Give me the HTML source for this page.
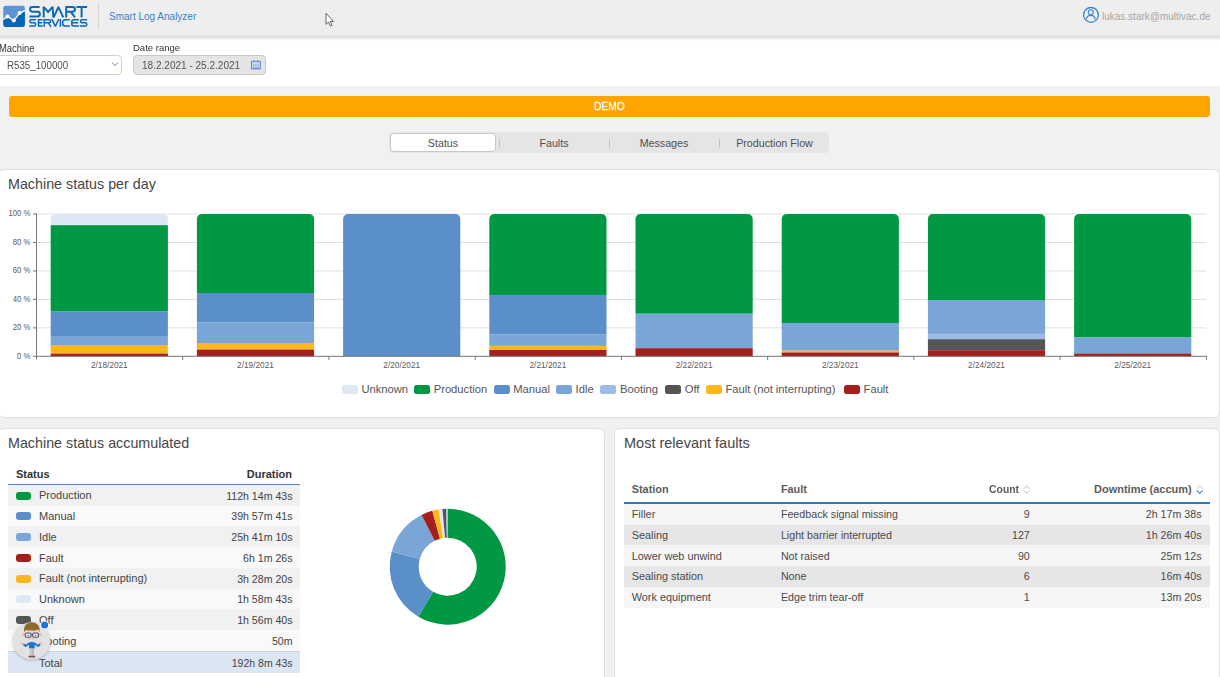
<!DOCTYPE html><html><head><meta charset="utf-8"><style>
*{box-sizing:border-box;margin:0;padding:0}
html,body{width:1220px;height:677px;overflow:hidden;background:#f1f1f1;font-family:"Liberation Sans",sans-serif;color:#333}
.a{position:absolute}
.t{position:absolute;white-space:nowrap;line-height:1}
#hdr{left:0;top:0;width:1220px;height:35px;background:#eeeeee;}
#flt{left:0;top:35px;width:1220px;height:51px;background:#fff}
.card{position:absolute;background:#fff;border:1px solid #e0e0e0;border-radius:6px}
.sel{position:absolute;border:1px solid #cfcfcf;border-radius:4px;background:#fff}
</style></head><body><div id="flt" class="a"></div>
<div id="hdr" class="a"></div>
<div class="a" style="left:0;top:34.6px;width:1220px;height:6px;background:linear-gradient(to bottom,rgba(0,0,0,.07) 0,rgba(0,0,0,.14) 30%,rgba(0,0,0,.04) 70%,rgba(0,0,0,0) 100%)"></div>
<svg class="a" style="left:0;top:0" width="100" height="35" viewBox="0 0 100 35">
<defs><clipPath id="lc"><rect x="3.3" y="5.85" width="21.6" height="21.05" rx="2.3"/></clipPath></defs>
<g clip-path="url(#lc)">
<rect x="3" y="5" width="23" height="23" fill="#5e94d3"/>
<path d="M2,20.8 L7.5,17 L13.8,21 L19.7,13.6 L26,10.6 L26,28 L2,28 Z" fill="#0765b8"/>
<path d="M2,20.4 L7.5,16.5 L13.8,20.5 L19.7,13.1 L26,10.1" fill="none" stroke="#fff" stroke-width="1.3" stroke-linejoin="round"/>
<circle cx="7.5" cy="16.4" r="2" fill="#fff"/><circle cx="13.8" cy="20.4" r="2" fill="#fff"/><circle cx="19.7" cy="13" r="2" fill="#fff"/>
</g>
<g fill="none" stroke="#0a66b8" stroke-width="1.95" stroke-linejoin="miter" stroke-miterlimit="2.5">
<path d="M39.6,7 H32.4 Q30.1,7 30.1,9.35 Q30.1,11.7 32.4,11.7 H37.5 Q39.9,11.7 39.9,14.1 Q39.9,16.5 37.5,16.5 H29.4"/>
<path d="M43.7,17.4 V6.8 L48.1,12 L52.6,6.8 L53.3,17.4"/>
<path d="M53.6,17.4 L58.4,7.2 L63.3,17.4" stroke-linejoin="round"/>
<path d="M66.2,17.4 V7 H72.6 Q75,7 75,9.35 Q75,11.7 72.6,11.7 H66.2 M70.6,11.7 L75,17.4"/>
<path d="M76.4,7 H87.1 M81.6,7 V17.4"/>
</g>
<g fill="none" stroke="#0a66b8" stroke-width="1.5" stroke-linejoin="miter" stroke-miterlimit="2">
<path d="M35.9,19.7 H31.2 Q29.9,19.7 29.9,21.25 Q29.9,22.8 31.2,22.8 H34.3 Q35.6,22.8 35.6,24.45 Q35.6,26.1 34.3,26.1 H29.2"/>
<path d="M42.7,19.7 H38.5 V26.1 H42.7 M38.5,22.8 H42.2"/>
<path d="M44.2,26.8 V19.7 H49 Q50.6,19.7 50.6,21.25 Q50.6,22.8 49,22.8 H44.2 M48.4,22.8 L51,26.8"/>
<path d="M51.8,19 L55.3,26.4 L58.8,19"/>
<path d="M60.4,19 V26.8"/>
<path d="M69.8,19.7 H65.4 Q62.6,19.7 62.6,22.9 Q62.6,26.1 65.4,26.1 H69.8"/>
<path d="M78.9,19.7 H74 Q71.8,19.7 71.8,21.7 V24.1 Q71.8,26.1 74,26.1 H78.9 M71.8,22.8 H78.2"/>
<path d="M87.1,19.7 H82.1 Q80.5,19.7 80.5,21.25 Q80.5,22.8 82.1,22.8 H85.3 Q86.8,22.8 86.8,24.45 Q86.8,26.1 85.3,26.1 H79.8"/>
</g>
<rect x="98" y="2" width="1" height="28" fill="#d6d6d6"/>
</svg>
<div class="t" style="left:109.00px;top:12.40px;font-size:10px;color:#3b82c4">Smart Log Analyzer</div>
<svg class="a" style="left:322px;top:10px" width="16" height="20" viewBox="0 0 16 20">
<path d="M4,3.2 L4,14.4 L6.6,12 L8.4,16 L10,15.3 L8.3,11.4 L11.6,11.4 Z" fill="#fff" stroke="#555" stroke-width="0.9" stroke-linejoin="round"/></svg>
<svg class="a" style="left:1080px;top:5px" width="22" height="20" viewBox="0 0 22 20">
<circle cx="11" cy="9.9" r="7.4" fill="none" stroke="#3a86c8" stroke-width="1.3"/>
<circle cx="10.8" cy="7.3" r="2.5" fill="none" stroke="#3a86c8" stroke-width="1.1"/>
<path d="M6.3,14.3 A4.6,4.9 0 0 1 15.3,14.3" fill="none" stroke="#3a86c8" stroke-width="1.2"/></svg>
<div class="t" style="left:1102.00px;top:11.90px;font-size:10px;color:#a6a6a6">lukas.stark@multivac.de</div>
<div class="t" style="left:-1.50px;top:44.20px;font-size:10px;color:#333;transform:scaleX(0.94);transform-origin:0 0">Machine</div>
<div class="sel" style="left:-6px;top:54.5px;width:128px;height:20.5px"></div>
<div class="t" style="left:7.00px;top:59.60px;font-size:11px;color:#4e4e4e;transform:scaleX(0.885);transform-origin:0 0">R535_100000</div>
<svg class="a" style="left:110px;top:60px" width="10" height="8" viewBox="0 0 10 8"><path d="M1.8,2.5 L5,5.6 L8.2,2.5" fill="none" stroke="#5a8fc6" stroke-width="1"/></svg>
<div class="t" style="left:133.00px;top:42.70px;font-size:9.8px;color:#333;transform:scaleX(0.97);transform-origin:0 0">Date range</div>
<div class="sel" style="left:133px;top:54.5px;width:133px;height:20.5px;background:#e4e4e4;border-color:#c9c9c9"></div>
<div class="t" style="left:142.00px;top:60.30px;font-size:10.5px;color:#555;transform:scaleX(0.955);transform-origin:0 0">18.2.2021 - 25.2.2021</div>
<svg class="a" style="left:250px;top:59px" width="12" height="11" viewBox="0 0 12 11">
<rect x="1.5" y="2.3" width="8.9" height="7.6" fill="#c6dcf2" stroke="#7382d2" stroke-width="1"/>
<path d="M3.6,5 V9.4 M5.9,5 V9.4 M8.2,5 V9.4" stroke="#8a9ad8" stroke-width="0.8"/>
<path d="M2,9.5 H10" stroke="#6e7ed0" stroke-width="0.8"/>
<rect x="3.5" y="1" width="1.1" height="2.4" fill="#6d9ad8"/><rect x="7.2" y="1" width="1.1" height="2.4" fill="#6d9ad8"/></svg>
<div class="a" style="left:8.5px;top:96px;width:1201.5px;height:20.8px;background:#ffa500;border-radius:3px;box-shadow:0 0 0 1px #eef2f7"></div>
<div class="t" style="left:593.50px;top:100.90px;font-size:10.5px;color:#fff;transform:scaleX(0.97);transform-origin:0 0;-webkit-text-stroke:0.3px #fff">DEMO</div>
<div class="a" style="left:389px;top:132px;width:440px;height:21px;background:#e5e5e5;border-radius:4px"></div>
<div class="a" style="left:390px;top:133px;width:106px;height:19px;background:#fff;border:1px solid #c8c8c8;border-radius:4px"></div>
<div class="a" style="left:498.5px;top:139px;width:1px;height:9px;background:#c4c4c4"></div>
<div class="a" style="left:608.8px;top:139px;width:1px;height:9px;background:#c4c4c4"></div>
<div class="a" style="left:719.2px;top:139px;width:1px;height:9px;background:#c4c4c4"></div>
<div class="t" style="left:343.00px;top:138.00px;font-size:10.7px;color:#4f4f4f;width:200px;text-align:center">Status</div>
<div class="t" style="left:454.00px;top:138.00px;font-size:10.7px;color:#4f4f4f;width:200px;text-align:center">Faults</div>
<div class="t" style="left:564.00px;top:138.00px;font-size:10.7px;color:#4f4f4f;width:200px;text-align:center">Messages</div>
<div class="t" style="left:674.50px;top:138.00px;font-size:10.7px;color:#4f4f4f;width:200px;text-align:center">Production Flow</div>
<div class="card" style="left:-2px;top:169px;width:1222px;height:249px"></div>
<div class="card" style="left:-2px;top:428px;width:607px;height:260px"></div>
<div class="card" style="left:614px;top:428px;width:606px;height:260px"></div>
<div class="t" style="left:8px;top:177px;font-size:14.3px;color:#464646">Machine status per day</div>
<div class="t" style="left:8px;top:436px;font-size:14.3px;color:#464646">Machine status accumulated</div>
<div class="t" style="left:624px;top:436px;font-size:14.5px;color:#464646">Most relevant faults</div>
<svg class="a" style="left:0;top:0" width="1220" height="677" viewBox="0 0 1220 677"><rect x="36.4" y="327.38" width="1170" height="1" fill="#dfdfdf"/><rect x="36.4" y="298.91" width="1170" height="1" fill="#dfdfdf"/><rect x="36.4" y="270.44" width="1170" height="1" fill="#dfdfdf"/><rect x="36.4" y="241.97" width="1170" height="1" fill="#dfdfdf"/><rect x="36.4" y="213.50" width="1170" height="1" fill="#dfdfdf"/><path d="M50.70,225.20 V219.45 Q50.70,213.95 56.20,213.95 H162.40 Q167.90,213.95 167.90,219.45 V225.20 Z" fill="#dee8f4"/><rect x="50.70" y="225.20" width="117.2" height="86.40" fill="#009843"/><rect x="50.70" y="311.60" width="117.2" height="24.40" fill="#5b8fca"/><rect x="50.70" y="336.00" width="117.2" height="9.00" fill="#79a6d7"/><rect x="50.70" y="345.00" width="117.2" height="8.60" fill="#fdb71c"/><rect x="50.70" y="353.60" width="117.2" height="2.75" fill="#a41f1e"/><text transform="translate(109.30,367.8) scale(0.9,1)" text-anchor="middle" font-size="9.2" fill="#5a5a5a" font-family="Liberation Sans">2/18/2021</text><path d="M196.90,293.00 V219.45 Q196.90,213.95 202.40,213.95 H308.60 Q314.10,213.95 314.10,219.45 V293.00 Z" fill="#009843"/><rect x="196.90" y="293.00" width="117.2" height="29.20" fill="#5b8fca"/><rect x="196.90" y="322.20" width="117.2" height="20.80" fill="#79a6d7"/><rect x="196.90" y="343.00" width="117.2" height="6.60" fill="#fdb71c"/><rect x="196.90" y="349.60" width="117.2" height="6.75" fill="#a41f1e"/><text transform="translate(255.50,367.8) scale(0.9,1)" text-anchor="middle" font-size="9.2" fill="#5a5a5a" font-family="Liberation Sans">2/19/2021</text><path d="M343.10,356.35 V219.45 Q343.10,213.95 348.60,213.95 H454.80 Q460.30,213.95 460.30,219.45 V356.35 Z" fill="#5b8fca"/><text transform="translate(401.70,367.8) scale(0.9,1)" text-anchor="middle" font-size="9.2" fill="#5a5a5a" font-family="Liberation Sans">2/20/2021</text><path d="M489.30,294.90 V219.45 Q489.30,213.95 494.80,213.95 H601.00 Q606.50,213.95 606.50,219.45 V294.90 Z" fill="#009843"/><rect x="489.30" y="294.90" width="117.2" height="39.70" fill="#5b8fca"/><rect x="489.30" y="334.60" width="117.2" height="11.30" fill="#79a6d7"/><rect x="489.30" y="345.90" width="117.2" height="4.10" fill="#fdb71c"/><rect x="489.30" y="350.00" width="117.2" height="6.35" fill="#a41f1e"/><text transform="translate(547.90,367.8) scale(0.9,1)" text-anchor="middle" font-size="9.2" fill="#5a5a5a" font-family="Liberation Sans">2/21/2021</text><path d="M635.50,313.70 V219.45 Q635.50,213.95 641.00,213.95 H747.20 Q752.70,213.95 752.70,219.45 V313.70 Z" fill="#009843"/><rect x="635.50" y="313.70" width="117.2" height="34.50" fill="#79a6d7"/><rect x="635.50" y="348.20" width="117.2" height="8.15" fill="#a41f1e"/><text transform="translate(694.10,367.8) scale(0.9,1)" text-anchor="middle" font-size="9.2" fill="#5a5a5a" font-family="Liberation Sans">2/22/2021</text><path d="M781.70,322.90 V219.45 Q781.70,213.95 787.20,213.95 H893.40 Q898.90,213.95 898.90,219.45 V322.90 Z" fill="#009843"/><rect x="781.70" y="322.90" width="117.2" height="27.80" fill="#79a6d7"/><rect x="781.70" y="350.70" width="117.2" height="1.80" fill="#fdb71c"/><rect x="781.70" y="352.50" width="117.2" height="3.85" fill="#a41f1e"/><text transform="translate(840.30,367.8) scale(0.9,1)" text-anchor="middle" font-size="9.2" fill="#5a5a5a" font-family="Liberation Sans">2/23/2021</text><path d="M927.90,300.00 V219.45 Q927.90,213.95 933.40,213.95 H1039.60 Q1045.10,213.95 1045.10,219.45 V300.00 Z" fill="#009843"/><rect x="927.90" y="300.00" width="117.2" height="33.90" fill="#79a6d7"/><rect x="927.90" y="333.90" width="117.2" height="5.30" fill="#9bbde5"/><rect x="927.90" y="339.20" width="117.2" height="11.00" fill="#555555"/><rect x="927.90" y="350.20" width="117.2" height="6.15" fill="#a41f1e"/><text transform="translate(986.50,367.8) scale(0.9,1)" text-anchor="middle" font-size="9.2" fill="#5a5a5a" font-family="Liberation Sans">2/24/2021</text><path d="M1074.10,337.50 V219.45 Q1074.10,213.95 1079.60,213.95 H1185.80 Q1191.30,213.95 1191.30,219.45 V337.50 Z" fill="#009843"/><rect x="1074.10" y="337.50" width="117.2" height="16.00" fill="#79a6d7"/><rect x="1074.10" y="353.50" width="117.2" height="2.85" fill="#a41f1e"/><text transform="translate(1132.70,367.8) scale(0.9,1)" text-anchor="middle" font-size="9.2" fill="#5a5a5a" font-family="Liberation Sans">2/25/2021</text><rect x="36" y="213.5" width="1" height="146" fill="#777"/><rect x="33" y="355.8" width="1173.5" height="1" fill="#777"/><rect x="33" y="327.38" width="3.5" height="1" fill="#777"/><rect x="33" y="298.91" width="3.5" height="1" fill="#777"/><rect x="33" y="270.44" width="3.5" height="1" fill="#777"/><rect x="33" y="241.97" width="3.5" height="1" fill="#777"/><rect x="33" y="213.50" width="3.5" height="1" fill="#777"/><rect x="182.15" y="356" width="1" height="4" fill="#777"/><rect x="328.40" y="356" width="1" height="4" fill="#777"/><rect x="474.65" y="356" width="1" height="4" fill="#777"/><rect x="620.90" y="356" width="1" height="4" fill="#777"/><rect x="767.15" y="356" width="1" height="4" fill="#777"/><rect x="913.40" y="356" width="1" height="4" fill="#777"/><rect x="1059.65" y="356" width="1" height="4" fill="#777"/><rect x="1205.90" y="356" width="1" height="4" fill="#777"/><text transform="translate(30.4,358.65) scale(0.88,1)" text-anchor="end" font-size="8.8" fill="#5a5a5a" font-family="Liberation Sans">0 %</text><text transform="translate(30.4,330.18) scale(0.88,1)" text-anchor="end" font-size="8.8" fill="#5a5a5a" font-family="Liberation Sans">20 %</text><text transform="translate(30.4,301.71) scale(0.88,1)" text-anchor="end" font-size="8.8" fill="#5a5a5a" font-family="Liberation Sans">40 %</text><text transform="translate(30.4,273.24) scale(0.88,1)" text-anchor="end" font-size="8.8" fill="#5a5a5a" font-family="Liberation Sans">60 %</text><text transform="translate(30.4,244.77) scale(0.88,1)" text-anchor="end" font-size="8.8" fill="#5a5a5a" font-family="Liberation Sans">80 %</text><text transform="translate(30.4,216.30) scale(0.88,1)" text-anchor="end" font-size="8.8" fill="#5a5a5a" font-family="Liberation Sans">100 %</text></svg>
<div class="a" style="left:341.9px;top:385.3px;width:16px;height:9.2px;background:#dee8f4;border-radius:2.5px"></div>
<div class="t" style="left:361.4px;top:384px;font-size:11.2px;color:#555">Unknown</div>
<div class="a" style="left:414.2px;top:385.3px;width:16px;height:9.2px;background:#009843;border-radius:2.5px"></div>
<div class="t" style="left:433.7px;top:384px;font-size:11.2px;color:#555">Production</div>
<div class="a" style="left:493.6px;top:385.3px;width:16px;height:9.2px;background:#5b8fca;border-radius:2.5px"></div>
<div class="t" style="left:513.2px;top:384px;font-size:11.2px;color:#555">Manual</div>
<div class="a" style="left:556px;top:385.3px;width:16px;height:9.2px;background:#79a6d7;border-radius:2.5px"></div>
<div class="t" style="left:575.6px;top:384px;font-size:11.2px;color:#555">Idle</div>
<div class="a" style="left:600.2px;top:385.3px;width:16px;height:9.2px;background:#9bbde5;border-radius:2.5px"></div>
<div class="t" style="left:620px;top:384px;font-size:11.2px;color:#555">Booting</div>
<div class="a" style="left:664.5px;top:385.3px;width:16px;height:9.2px;background:#555555;border-radius:2.5px"></div>
<div class="t" style="left:684.7px;top:384px;font-size:11.2px;color:#555">Off</div>
<div class="a" style="left:705.6px;top:385.3px;width:16px;height:9.2px;background:#fdb71c;border-radius:2.5px"></div>
<div class="t" style="left:725.5px;top:384px;font-size:11.2px;color:#555">Fault (not interrupting)</div>
<div class="a" style="left:844.1px;top:385.3px;width:16px;height:9.2px;background:#a41f1e;border-radius:2.5px"></div>
<div class="t" style="left:863.6px;top:384px;font-size:11.2px;color:#555">Fault</div>
<div class="t" style="left:16px;top:468.5px;font-size:11px;font-weight:bold;color:#333">Status</div>
<div class="t" style="left:192px;width:100px;text-align:right;top:468.5px;font-size:11px;font-weight:bold;color:#333">Duration</div>
<div class="a" style="left:8px;top:483.6px;width:292px;height:1.4px;background:#4a86c6"></div>
<div class="a" style="left:8px;top:485.00px;width:292px;height:20.78px;background:#f1f1f1"></div>
<div class="a" style="left:15.7px;top:491.60px;width:15.3px;height:8px;background:#009843;border-radius:3px"></div>
<div class="t" style="left:39px;top:490.40px;font-size:11px;color:#444">Production</div>
<div class="t" style="left:192px;width:100.5px;text-align:right;top:490.60px;font-size:10.6px;color:#444">112h 14m 43s</div>
<div class="a" style="left:8px;top:505.73px;width:292px;height:20.78px;background:#f9f9f9"></div>
<div class="a" style="left:15.7px;top:512.33px;width:15.3px;height:8px;background:#5b8fca;border-radius:3px"></div>
<div class="t" style="left:39px;top:511.13px;font-size:11px;color:#444">Manual</div>
<div class="t" style="left:192px;width:100.5px;text-align:right;top:511.33px;font-size:10.6px;color:#444">39h 57m 41s</div>
<div class="a" style="left:8px;top:526.46px;width:292px;height:20.78px;background:#f1f1f1"></div>
<div class="a" style="left:15.7px;top:533.06px;width:15.3px;height:8px;background:#79a6d7;border-radius:3px"></div>
<div class="t" style="left:39px;top:531.86px;font-size:11px;color:#444">Idle</div>
<div class="t" style="left:192px;width:100.5px;text-align:right;top:532.06px;font-size:10.6px;color:#444">25h 41m 10s</div>
<div class="a" style="left:8px;top:547.19px;width:292px;height:20.78px;background:#f9f9f9"></div>
<div class="a" style="left:15.7px;top:553.79px;width:15.3px;height:8px;background:#a41f1e;border-radius:3px"></div>
<div class="t" style="left:39px;top:552.59px;font-size:11px;color:#444">Fault</div>
<div class="t" style="left:192px;width:100.5px;text-align:right;top:552.79px;font-size:10.6px;color:#444">6h 1m 26s</div>
<div class="a" style="left:8px;top:567.92px;width:292px;height:20.78px;background:#f1f1f1"></div>
<div class="a" style="left:15.7px;top:574.52px;width:15.3px;height:8px;background:#fdb71c;border-radius:3px"></div>
<div class="t" style="left:39px;top:573.32px;font-size:11px;color:#444">Fault (not interrupting)</div>
<div class="t" style="left:192px;width:100.5px;text-align:right;top:573.52px;font-size:10.6px;color:#444">3h 28m 20s</div>
<div class="a" style="left:8px;top:588.65px;width:292px;height:20.78px;background:#f9f9f9"></div>
<div class="a" style="left:15.7px;top:595.25px;width:15.3px;height:8px;background:#dee8f4;border-radius:3px"></div>
<div class="t" style="left:39px;top:594.05px;font-size:11px;color:#444">Unknown</div>
<div class="t" style="left:192px;width:100.5px;text-align:right;top:594.25px;font-size:10.6px;color:#444">1h 58m 43s</div>
<div class="a" style="left:8px;top:609.38px;width:292px;height:20.78px;background:#f1f1f1"></div>
<div class="a" style="left:15.7px;top:615.98px;width:15.3px;height:8px;background:#555555;border-radius:3px"></div>
<div class="t" style="left:39px;top:614.78px;font-size:11px;color:#444">Off</div>
<div class="t" style="left:192px;width:100.5px;text-align:right;top:614.98px;font-size:10.6px;color:#444">1h 56m 40s</div>
<div class="a" style="left:8px;top:630.11px;width:292px;height:20.78px;background:#f9f9f9"></div>
<div class="a" style="left:15.7px;top:636.71px;width:15.3px;height:8px;background:#9bbde5;border-radius:3px"></div>
<div class="t" style="left:39px;top:635.51px;font-size:11px;color:#444">Booting</div>
<div class="t" style="left:192px;width:100.5px;text-align:right;top:635.71px;font-size:10.6px;color:#444">50m</div>
<div class="a" style="left:8px;top:650.84px;width:292px;height:21.73px;background:#dce6f2;border-top:1px solid #c9d3de"></div>
<div class="t" style="left:39px;top:657.64px;font-size:11px;color:#444">Total</div>
<div class="t" style="left:192px;width:100.5px;text-align:right;top:657.64px;font-size:10.5px;color:#444">192h 8m 43s</div>
<svg class="a" style="left:0;top:0" width="1220" height="677" viewBox="0 0 1220 677"><path d="M447.700,508.700 A58,58 0 1 1 418.437,616.777 L433.068,591.738 A29,29 0 1 0 447.700,537.700 Z" fill="#009843"/><path d="M418.437,616.777 A58,58 0 0 1 391.722,551.521 L419.711,559.110 A29,29 0 0 0 433.068,591.738 Z" fill="#5b8fca"/><path d="M391.722,551.521 A58,58 0 0 1 421.637,514.886 L434.668,540.793 A29,29 0 0 0 419.711,559.110 Z" fill="#79a6d7"/><path d="M421.637,514.886 A58,58 0 0 1 432.281,510.787 L439.991,538.744 A29,29 0 0 0 434.668,540.793 Z" fill="#a41f1e"/><path d="M432.281,510.787 A58,58 0 0 1 438.715,509.400 L443.208,538.050 A29,29 0 0 0 439.991,538.744 Z" fill="#fdb71c"/><path d="M438.715,509.400 A58,58 0 0 1 442.439,508.939 L445.069,537.820 A29,29 0 0 0 443.208,538.050 Z" fill="#dee8f4"/><path d="M442.439,508.939 A58,58 0 0 1 446.120,508.722 L446.910,537.711 A29,29 0 0 0 445.069,537.820 Z" fill="#555555"/><path d="M446.120,508.722 A58,58 0 0 1 447.700,508.700 L447.700,537.700 A29,29 0 0 0 446.910,537.711 Z" fill="#9bbde5"/></svg>
<div class="t" style="left:631.7px;top:484.4px;font-size:10.9px;font-weight:bold;color:#5c5c5c">Station</div>
<div class="t" style="left:780.9px;top:484.4px;font-size:10.9px;font-weight:bold;color:#5c5c5c">Fault</div>
<div class="t" style="left:918.7px;width:100px;text-align:right;top:484.4px;font-size:10.9px;font-weight:bold;color:#5c5c5c;transform:scaleX(0.95);transform-origin:100% 0">Count</div>
<div class="t" style="left:991.6px;width:200px;text-align:right;top:484.4px;font-size:10.98px;font-weight:bold;color:#5c5c5c">Downtime (accum)</div>
<svg class="a" style="left:1023.4px;top:482px" width="8" height="13" viewBox="0 0 8 13"><path d="M0.6,7 L3.7,3.9 L6.8,7" fill="none" stroke="#d4d4d4" stroke-width="1.1"/><path d="M0.6,8.3 L3.7,11.4 L6.8,8.3" fill="none" stroke="#d4d4d4" stroke-width="1.1"/></svg>
<svg class="a" style="left:1195.5px;top:482px" width="8" height="13" viewBox="0 0 8 13"><path d="M0.6,7 L3.7,3.9 L6.8,7" fill="none" stroke="#d8d8d8" stroke-width="1.1"/><path d="M0.6,8.3 L3.7,11.4 L6.8,8.3" fill="none" stroke="#4a8ac8" stroke-width="1.1"/></svg>
<div class="a" style="left:624.2px;top:502.4px;width:586.2px;height:1.6px;background:#2f79bd"></div>
<div class="a" style="left:624.2px;top:504.00px;width:586.2px;height:20.75px;background:#f6f6f6"></div>
<div class="t" style="left:631.7px;top:509.20px;font-size:10.9px;color:#4a4a4a">Filler</div>
<div class="t" style="left:780.9px;top:509.20px;font-size:10.7px;color:#4a4a4a">Feedback signal missing</div>
<div class="t" style="left:929.8px;width:100px;text-align:right;top:509.20px;font-size:10.7px;color:#4a4a4a">9</div>
<div class="t" style="left:1001.6px;width:200px;text-align:right;top:509.20px;font-size:10.7px;color:#4a4a4a">2h 17m 38s</div>
<div class="a" style="left:624.2px;top:524.70px;width:586.2px;height:20.75px;background:#e6e6e6"></div>
<div class="t" style="left:631.7px;top:529.90px;font-size:10.9px;color:#4a4a4a">Sealing</div>
<div class="t" style="left:780.9px;top:529.90px;font-size:10.7px;color:#4a4a4a">Light barrier interrupted</div>
<div class="t" style="left:929.8px;width:100px;text-align:right;top:529.90px;font-size:10.7px;color:#4a4a4a">127</div>
<div class="t" style="left:1001.6px;width:200px;text-align:right;top:529.90px;font-size:10.7px;color:#4a4a4a">1h 26m 40s</div>
<div class="a" style="left:624.2px;top:545.40px;width:586.2px;height:20.75px;background:#f6f6f6"></div>
<div class="t" style="left:631.7px;top:550.60px;font-size:10.9px;color:#4a4a4a">Lower web unwind</div>
<div class="t" style="left:780.9px;top:550.60px;font-size:10.7px;color:#4a4a4a">Not raised</div>
<div class="t" style="left:929.8px;width:100px;text-align:right;top:550.60px;font-size:10.7px;color:#4a4a4a">90</div>
<div class="t" style="left:1001.6px;width:200px;text-align:right;top:550.60px;font-size:10.7px;color:#4a4a4a">25m 12s</div>
<div class="a" style="left:624.2px;top:566.10px;width:586.2px;height:20.75px;background:#e6e6e6"></div>
<div class="t" style="left:631.7px;top:571.30px;font-size:10.9px;color:#4a4a4a">Sealing station</div>
<div class="t" style="left:780.9px;top:571.30px;font-size:10.7px;color:#4a4a4a">None</div>
<div class="t" style="left:929.8px;width:100px;text-align:right;top:571.30px;font-size:10.7px;color:#4a4a4a">6</div>
<div class="t" style="left:1001.6px;width:200px;text-align:right;top:571.30px;font-size:10.7px;color:#4a4a4a">16m 40s</div>
<div class="a" style="left:624.2px;top:586.80px;width:586.2px;height:20.75px;background:#f6f6f6"></div>
<div class="t" style="left:631.7px;top:592.00px;font-size:10.9px;color:#4a4a4a">Work equipment</div>
<div class="t" style="left:780.9px;top:592.00px;font-size:10.7px;color:#4a4a4a">Edge trim tear-off</div>
<div class="t" style="left:929.8px;width:100px;text-align:right;top:592.00px;font-size:10.7px;color:#4a4a4a">1</div>
<div class="t" style="left:1001.6px;width:200px;text-align:right;top:592.00px;font-size:10.7px;color:#4a4a4a">13m 20s</div>
<svg class="a" style="left:8px;top:615px" width="50" height="52" viewBox="0 0 50 52">
<defs><filter id="sh" x="-40%" y="-40%" width="180%" height="180%"><feGaussianBlur stdDeviation="1.6"/></filter></defs>
<circle cx="23.6" cy="26.8" r="18.8" fill="#000" opacity="0.2" filter="url(#sh)"/>
<circle cx="23.6" cy="25.9" r="18.6" fill="#e2e2e2"/>
<circle cx="15.4" cy="19.6" r="1.5" fill="#efbba5"/><circle cx="32.4" cy="19.6" r="1.5" fill="#efbba5"/>
<ellipse cx="23.9" cy="19.6" rx="7.7" ry="6" fill="#f5cfbd"/>
<path d="M15.9,17.8 Q15,7.4 23.8,7.2 Q32.4,7.4 31.8,17.6 Q31,15 29.6,14.6 Q27.4,16 24.6,15.6 Q22,14.6 20.6,15.8 Q18.8,14.6 17.4,15.4 Q16.4,16.4 15.9,17.8 Z" fill="#8b6a2c"/>
<rect x="17.2" y="17.9" width="5.8" height="4.4" rx="1.2" fill="#dfe9ea" stroke="#46507a" stroke-width="1.05"/>
<rect x="24.7" y="17.9" width="5.8" height="4.4" rx="1.2" fill="#dfe9ea" stroke="#46507a" stroke-width="1.05"/>
<path d="M23,19.6 H24.7" stroke="#46507a" stroke-width="0.8"/>
<circle cx="20.2" cy="20.2" r="0.8" fill="#5f9ea6"/><circle cx="27.5" cy="20.2" r="0.8" fill="#5f9ea6"/>
<path d="M20.8,27.6 Q23.8,26.6 26.9,27.6 L26.6,33.6 L21.1,33.6 Z" fill="#1b74cc"/>
<path d="M21.4,28.2 L17.6,31 L15.2,29 M26.3,28.2 L30.1,31 L32.5,29" fill="none" stroke="#1b74cc" stroke-width="1.9" stroke-linejoin="round"/>
<circle cx="14.4" cy="28.6" r="1.3" fill="#f1c2ad"/><circle cx="33.2" cy="28.6" r="1.3" fill="#f1c2ad"/>
<rect x="21.7" y="33.5" width="2" height="7.6" fill="#c4c4c4"/><rect x="23.9" y="33.5" width="2" height="7.6" fill="#b8b8b8"/>
<path d="M20.6,40.8 H23.8 V42.6 H20.6 Z M23.9,40.8 H27.1 V42.6 H23.9 Z" fill="#6a5a4a"/>
<circle cx="36.6" cy="10.1" r="4.5" fill="#fff"/><circle cx="36.6" cy="10.1" r="3.5" fill="#1f6fe0"/>
</svg></body></html>
